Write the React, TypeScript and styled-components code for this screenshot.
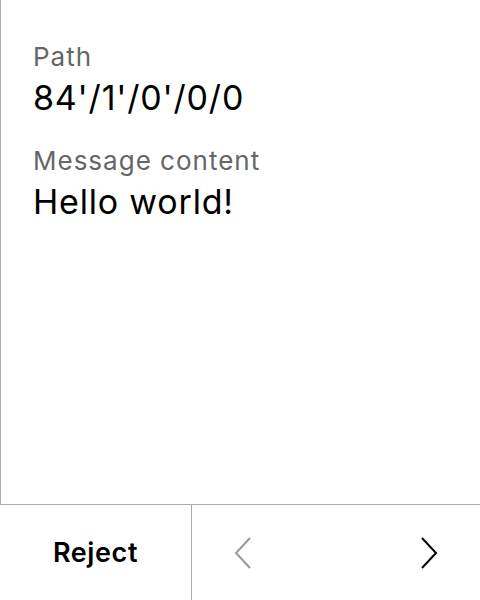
import React from "react";
import styled, { createGlobalStyle } from "styled-components";

const Global = createGlobalStyle`
  html, body { margin: 0; padding: 0; background: #fff; }
  body { font-family: Inter, "Noto Sans", sans-serif; }
`;

const Screen = styled.div`
  width: 480px;
  height: 600px;
  display: flex;
  flex-direction: column;
  background: #fff;
`;

const Content = styled.div`
  flex: 1;
  border-left: 1px solid #aaa;
  border-bottom: 1px solid #aaa;
  padding: 41px 32px 0 32px;
  display: flex;
  flex-direction: column;
  gap: 27px;
`;

const Field = styled.div`
  display: flex;
  flex-direction: column;
  gap: 5px;
`;

const Label = styled.div`
  font-size: 26px;
  line-height: 32px;
  letter-spacing: 1px;
  color: #666;
`;

const Value = styled.div`
  font-size: 34px;
  line-height: 40px;
  letter-spacing: 0.8px;
  color: #000;
`;

const Footer = styled.div`
  height: 95px;
  display: flex;
`;

const RejectButton = styled.button`
  width: 192px;
  border: none;
  border-right: 1px solid #aaa;
  background: #fff;
  font-family: Inter, sans-serif;
  font-size: 27px;
  font-weight: 600;
  letter-spacing: 0.6px;
  color: #000;
  padding: 0;
`;

const Nav = styled.div`
  flex: 1;
  display: flex;
  align-items: center;
  justify-content: space-between;
  padding: 0 42px;
`;

const NavButton = styled.button<{ $disabled?: boolean }>`
  border: none;
  background: none;
  padding: 0;
  display: flex;
  color: ${(p) => (p.$disabled ? "#999" : "#000")};
`;

const Chevron = ({ dir }: { dir: "left" | "right" }) => (
  <svg width="18" height="32" viewBox="0 0 18 32" fill="none">
    <path
      d={dir === "left" ? "M16 1 L2 16 L16 31" : "M2 1 L16 16 L2 31"}
      stroke="currentColor"
      strokeWidth="2"
    />
  </svg>
);

export default function App() {
  return (
    <Screen>
      <Global />
      <Content>
        <Field>
          <Label>Path</Label>
          <Value>84'/1'/0'/0/0</Value>
        </Field>
        <Field>
          <Label>Message content</Label>
          <Value>Hello world!</Value>
        </Field>
      </Content>
      <Footer>
        <RejectButton>Reject</RejectButton>
        <Nav>
          <NavButton $disabled>
            <Chevron dir="left" />
          </NavButton>
          <NavButton>
            <Chevron dir="right" />
          </NavButton>
        </Nav>
      </Footer>
    </Screen>
  );
}
